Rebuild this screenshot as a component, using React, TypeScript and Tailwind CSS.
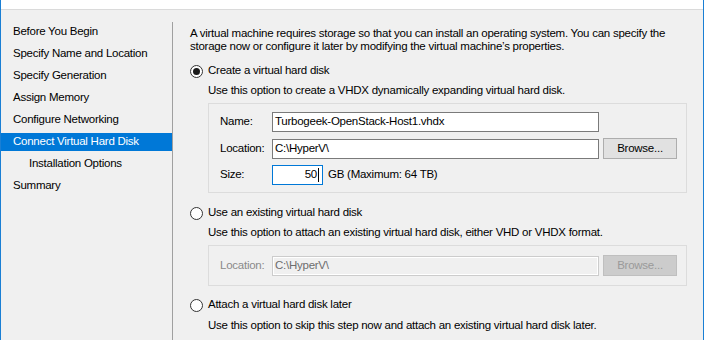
import React from "react";

const navItems: { label: string; indent?: boolean; active?: boolean }[] = [
  { label: "Before You Begin" },
  { label: "Specify Name and Location" },
  { label: "Specify Generation" },
  { label: "Assign Memory" },
  { label: "Configure Networking" },
  { label: "Connect Virtual Hard Disk", active: true },
  { label: "Installation Options", indent: true },
  { label: "Summary" },
];

function Radio({ checked }: { checked?: boolean }) {
  return (
    <span className="flex h-[13px] w-[13px] shrink-0 items-center justify-center rounded-full border border-[#333333] bg-white">
      {checked && <span className="h-[7px] w-[7px] rounded-full bg-[#1a1a1a]" />}
    </span>
  );
}

export default function App() {
  return (
    <div
      className="flex h-[340px] w-[704px] flex-col overflow-hidden border-l border-r border-[#1a7fd4] bg-[#f0f0f0] text-[11.5px] tracking-[-0.25px] text-black"
      style={{ fontFamily: '"Liberation Sans", "Segoe UI", sans-serif' }}
    >
      <div className="h-[10px] shrink-0 border-b border-[#dadada] bg-white" />
      <div className="flex min-h-0 flex-1">
        {/* Left nav */}
        <div className="w-[172px] shrink-0 pt-[12px]">
          <div className="flex h-full flex-col gap-[4px] border-r border-[#a0a0a0] pt-[1px]">
            {navItems.map((it) => (
              <div
                key={it.label}
                className={`flex h-[18px] items-center whitespace-nowrap leading-none ${
                  it.indent ? "pl-[28px]" : "pl-[12px]"
                } ${it.active ? "bg-[#0078d7] text-white" : ""}`}
              >
                {it.label}
              </div>
            ))}
          </div>
        </div>

        {/* Content */}
        <div className="flex flex-1 flex-col pl-[17px] pt-[17px] whitespace-nowrap">
          <p className="leading-[13px]">
            A virtual machine requires storage so that you can install an operating system. You can specify the
            <br />
            storage now or configure it later by modifying the virtual machine’s properties.
          </p>

          {/* Option 1 */}
          <div className="mt-[9px] flex h-[18px] items-center gap-[5px]">
            <Radio checked />
            <span>Create a virtual hard disk</span>
          </div>
          <div className="ml-[18px] mt-[2px] flex h-[18px] items-center">
            Use this option to create a VHDX dynamically expanding virtual hard disk.
          </div>
          <div className="ml-[18px] mt-[3px] flex w-[479px] flex-col gap-[6px] border border-[#dcdcdc] pb-[7px] pl-[11px] pt-[8px]">
            <div className="flex items-center">
              <span className="w-[52px]">Name:</span>
              <div className="flex h-[20px] w-[327px] items-center border border-[#7a7a7a] bg-white pl-[2px]">
                Turbogeek-OpenStack-Host1.vhdx
              </div>
            </div>
            <div className="flex items-center">
              <span className="w-[52px]">Location:</span>
              <div className="flex h-[20px] w-[327px] items-center border border-[#7a7a7a] bg-white pl-[2px]">
                C:\HyperV\
              </div>
              <button className="ml-[4px] flex h-[21px] w-[74px] items-center justify-center border border-[#adadad] bg-[#e1e1e1]">
                Browse...
              </button>
            </div>
            <div className="flex items-center">
              <span className="w-[52px]">Size:</span>
              <div className="flex h-[20px] w-[51px] items-center justify-end border border-[#0078d7] bg-white pr-[3px]">
                <span>50</span>
                <span className="ml-[1px] h-[14px] w-px bg-black" />
              </div>
              <span className="ml-[5px]">GB (Maximum: 64 TB)</span>
            </div>
          </div>

          {/* Option 2 */}
          <div className="mt-[11px] flex h-[18px] items-center gap-[5px]">
            <Radio />
            <span>Use an existing virtual hard disk</span>
          </div>
          <div className="ml-[18px] mt-[2px] flex h-[18px] items-center">
            Use this option to attach an existing virtual hard disk, either VHD or VHDX format.
          </div>
          <div className="ml-[18px] mt-[3px] flex w-[479px] items-center border border-[#dcdcdc] py-[9px] pl-[11px]">
            <span className="w-[52px] text-[#8a8a8a]">Location:</span>
            <div className="flex h-[20px] w-[327px] items-center border border-[#cccccc] bg-[#f0f0f0] pl-[2px] text-[#6d6d6d] shadow-[inset_0_0_0_1px_#ffffff]">
              C:\HyperV\
            </div>
            <button className="ml-[4px] flex h-[21px] w-[74px] items-center justify-center border border-[#bfbfbf] bg-[#cccccc] text-[#9a9a9a]">
              Browse...
            </button>
          </div>

          {/* Option 3 */}
          <div className="mt-[10px] flex h-[18px] items-center gap-[5px]">
            <Radio />
            <span>Attach a virtual hard disk later</span>
          </div>
          <div className="ml-[18px] mt-[3px] flex h-[18px] items-center">
            Use this option to skip this step now and attach an existing virtual hard disk later.
          </div>
        </div>
      </div>
    </div>
  );
}
